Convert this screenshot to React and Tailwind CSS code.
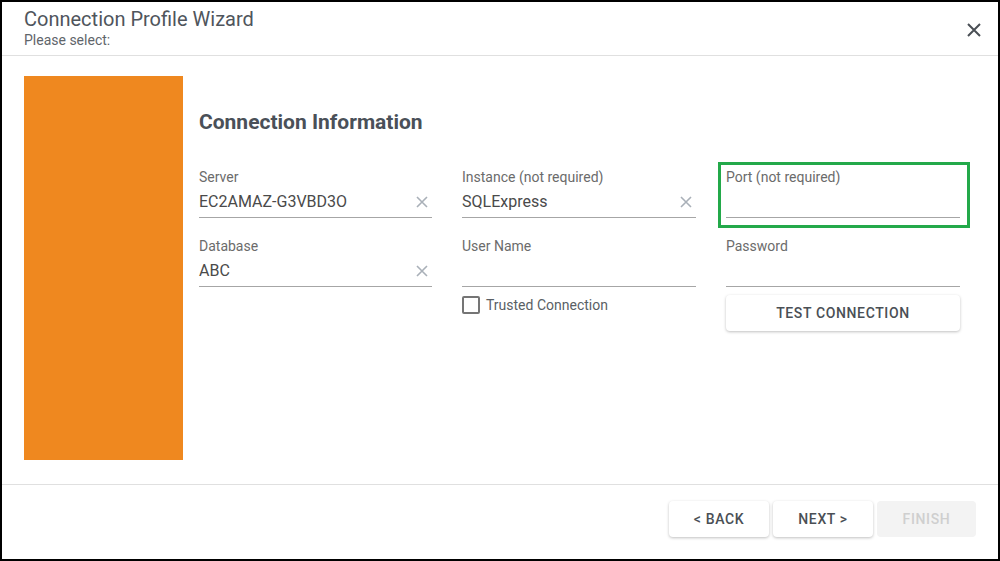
import React from 'react';

const font = { fontFamily: 'Roboto, "Liberation Sans", sans-serif' };

const ClearIcon = () => (
    <svg width="12" height="12" viewBox="0 0 12 12" className="shrink-0">
        <path d="M1 1L11 11M11 1L1 11" stroke="#a9b0b8" strokeWidth="1.6" />
    </svg>
);

const Field = ({ label, value, clear }) => (
    <div className="flex flex-col">
        <div className="text-[14px] leading-[20px] text-[#6b6b6b]">{label}</div>
        <div className="mt-[3px] flex items-center h-[24px] border-b border-[#a6a6a6] box-content pb-[3px]">
            <span className="flex-1 text-[16px] leading-[24px] text-[#4a4a4a]">{value}</span>
            {clear && <span className="mr-[4px]"><ClearIcon /></span>}
        </div>
    </div>
);

const FooterButton = ({ children, disabled }) => (
    <button
        className={
            disabled
                ? 'w-[99px] h-[36px] rounded bg-[#f3f3f3] text-[#cfcfcf] text-[14px] font-medium tracking-[0.045em]'
                : 'w-[100px] h-[36px] rounded bg-white text-[#4a4f55] text-[14px] font-medium tracking-[0.045em] shadow-[0_1px_3px_rgba(0,0,0,0.25)]'
        }
    >
        {children}
    </button>
);

export default function App() {
    return (
        <div style={font} className="w-[1000px] h-[561px] bg-white border-2 border-black flex flex-col overflow-hidden">
            {/* Header */}
            <div className="flex items-start justify-between pl-[22px] pr-[16px] pt-[4px] h-[54px] border-b border-[#e0e0e0]">
                <div>
                    <div className="text-[20px] leading-[26px] text-[#4f555c]">Connection Profile Wizard</div>
                    <div className="text-[14px] leading-[16px] text-[#5f656b]">Please select:</div>
                </div>
                <svg width="16" height="16" viewBox="0 0 16 16" className="mt-[16px]">
                    <path d="M2 2L14 14M14 2L2 14" stroke="#4a4f55" strokeWidth="2" />
                </svg>
            </div>

            {/* Body */}
            <div className="flex pl-[22px] pt-[20px] pb-[24px] border-b border-[#e0e0e0]">
                <div className="w-[159px] h-[384px] bg-[#ef881f]" />
                <div className="ml-[16px] pt-[32px]">
                    <h2 className="text-[21px] leading-[28px] font-bold text-[#4a5058]">Connection Information</h2>
                    <div className="mt-[31px] grid grid-cols-[233px_234px_234px] gap-x-[30px] gap-y-[18px]">
                        <Field label="Server" value="EC2AMAZ-G3VBD3O" clear />
                        <Field label="Instance (not required)" value="SQLExpress" clear />
                        <div className="relative">
                            <div className="absolute left-[-8px] right-[-10px] top-[-5px] bottom-[-10px] border-[3px] border-[#23a94a]" />
                            <Field label="Port (not required)" value="" />
                        </div>
                        <Field label="Database" value="ABC" clear />
                        <Field label="User Name" value="" />
                        <Field label="Password" value="" />
                    </div>
                    <div className="mt-[8px] grid grid-cols-[233px_234px_234px] gap-x-[30px]">
                        <div />
                        <label className="flex items-center h-[20px]">
                            <span className="w-[18px] h-[18px] border-2 border-[#757575] rounded-[2px]" />
                            <span className="ml-[6px] text-[14px] text-[#5a5f65]">Trusted Connection</span>
                        </label>
                        <button className="h-[36px] rounded bg-white text-[14px] font-medium tracking-[0.045em] text-[#4a4f55] shadow-[0_1px_3px_rgba(0,0,0,0.25)]">
                            TEST CONNECTION
                        </button>
                    </div>
                </div>
            </div>

            {/* Footer */}
            <div className="flex justify-end gap-[4px] pt-[16px] pr-[22px]">
                <FooterButton>&lt; BACK</FooterButton>
                <FooterButton>NEXT &gt;</FooterButton>
                <FooterButton disabled>FINISH</FooterButton>
            </div>
        </div>
    );
}
